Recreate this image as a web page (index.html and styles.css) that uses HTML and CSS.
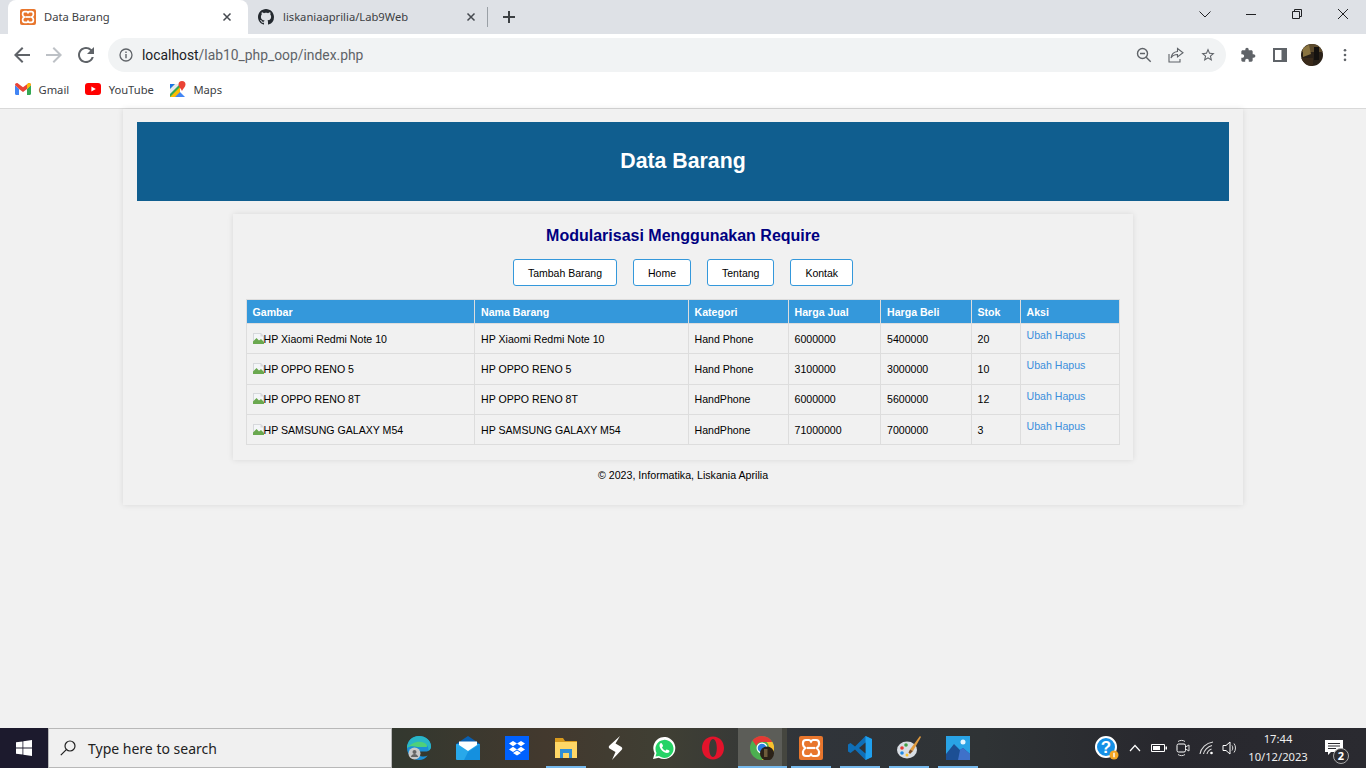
FILE: index.html
```html
<!DOCTYPE html>
<html lang="id">
<head>
<meta charset="utf-8">
<title>Data Barang</title>
<link rel="stylesheet" href="styles.css">
</head>
<body>
<div class="browser">
  <div class="tabstrip">
    <div class="tab active">
      <svg class="fav" viewBox="0 0 24 24"><rect width="24" height="24" rx="3" fill="#e8762d"/><path d="M7 4h3c1 0 1.500.8 2 1.500C12.500 4.800 13 4 14 4h3c2 0 3 1 3 3v1.500c0 1.500-1.200 2.500-2.500 3.500 1.300 1 2.500 2 2.500 3.500V17c0 2-1 3-3 3h-3c-1 0-1.500-.8-2-1.500-.5.7-1 1.500-2 1.500H7c-2 0-3-1-3-3v-1.500c0-1.500 1.200-2.500 2.500-3.500C5.200 11 4 10 4 8.500V7c0-2 1-3 3-3z" fill="none" stroke="#fff" stroke-width="2.600"/><path d="M8 12h8" stroke="#fff" stroke-width="2.600"/></svg>
      <span class="tab-title">Data Barang</span>
      <svg class="tab-x" viewBox="0 0 10 10"><path d="M1.500 1.500l7 7M8.500 1.500l-7 7" stroke="#45494f" stroke-width="1.500"/></svg>
    </div>
    <div class="tab second">
      <svg class="fav" viewBox="0 0 16 16"><path fill="#24292f" d="M8 0C3.580 0 0 3.580 0 8c0 3.540 2.290 6.530 5.470 7.590.4.070.550-.170.550-.380 0-.190-.010-.820-.010-1.490-2.010.370-2.530-.490-2.690-.940-.090-.230-.480-.940-.820-1.130-.280-.150-.680-.520-.010-.530.630-.010 1.080.580 1.230.820.720 1.210 1.870.870 2.330.660.070-.520.280-.870.510-1.070-1.780-.2-3.640-.890-3.640-3.950 0-.870.310-1.590.820-2.150-.080-.2-.360-1.020.080-2.120 0 0 .670-.210 2.200.820.640-.180 1.320-.270 2-.270.680 0 1.360.090 2 .270 1.530-1.040 2.200-.820 2.200-.820.440 1.100.160 1.920.080 2.120.510.560.820 1.270.820 2.150 0 3.070-1.870 3.750-3.650 3.950.290.250.540.730.540 1.480 0 1.070-.010 1.930-.010 2.200 0 .210.150.460.550.380A8.013 8.013 0 0016 8c0-4.420-3.580-8-8-8z"/></svg>
      <span class="tab-title">liskaniaaprilia/Lab9Web</span>
      <svg class="tab-x" viewBox="0 0 10 10"><path d="M1.500 1.500l7 7M8.500 1.500l-7 7" stroke="#45494f" stroke-width="1.500"/></svg>
    </div>
    <div class="tab-sep"></div>
    <svg class="new-tab" viewBox="0 0 14 14"><path d="M7 1v12M1 7h12" stroke="#3c4043" stroke-width="2"/></svg>
    <div class="win-controls">
      <svg class="win-btn" viewBox="0 0 12 12"><path d="M.5 3.500l5.500 5.500 5.500-5.500" fill="none" stroke="#202124"/></svg>
      <svg class="win-btn" viewBox="0 0 12 12"><path d="M1 6.500h10" stroke="#202124"/></svg>
      <svg class="win-btn" viewBox="0 0 12 12"><path d="M1.500 3.500h7v7h-7zM3.500 3.500v-2h7v7h-2" fill="none" stroke="#202124"/></svg>
      <svg class="win-btn" viewBox="0 0 12 12"><path d="M1 1l10 10M11 1L1 11" stroke="#202124"/></svg>
    </div>
  </div>

  <div class="toolbar">
    <svg class="nav-icon" viewBox="0 0 24 24"><path fill="#5f6368" d="M20 11H7.830l5.590-5.590L12 4l-8 8 8 8 1.410-1.410L7.830 13H20v-2z"/></svg>
    <svg class="nav-icon" viewBox="0 0 24 24"><path fill="#bdc1c6" d="M4 11h12.170l-5.590-5.590L12 4l8 8-8 8-1.410-1.410L16.170 13H4v-2z"/></svg>
    <svg class="nav-icon" viewBox="0 0 24 24"><path fill="#5f6368" d="M17.650 6.350A7.958 7.958 0 0012 4c-4.420 0-7.990 3.580-7.990 8s3.570 8 7.990 8c3.730 0 6.840-2.550 7.730-6h-2.080A5.990 5.990 0 0112 18c-3.310 0-6-2.690-6-6s2.690-6 6-6c1.660 0 3.140.690 4.220 1.780L13 11h7V4l-2.350 2.350z"/></svg>
    <div class="omnibox">
      <svg class="info" viewBox="0 0 14 14"><circle cx="7" cy="7" r="6" fill="none" stroke="#5f6368" stroke-width="1.300"/><path d="M7 6v4.200M7 3.600v1.400" stroke="#5f6368" stroke-width="1.400"/></svg>
      <span class="url"><span class="host">localhost</span>/lab10_php_oop/index.php</span>
      <span class="omni-spacer"></span>
      <svg class="omni-icon" viewBox="0 0 16 16"><circle cx="6.500" cy="6.500" r="5" fill="none" stroke="#5f6368" stroke-width="1.400"/><path d="M4 6.500h5M10.200 10.200l4.500 4.500" stroke="#5f6368" stroke-width="1.400"/></svg>
      <svg class="omni-icon" viewBox="0 0 16 16"><path d="M9.500 1.500l5.500 4.300-5.500 4.200V7.500c-3 0-5 1-6.500 3.500.5-3.500 2.500-6 6.500-6.500z" fill="none" stroke="#5f6368" stroke-width="1.100"/><path d="M1 7v8h11v-3" fill="none" stroke="#5f6368" stroke-width="1.100"/></svg>
      <svg class="omni-icon" viewBox="0 0 24 24"><path fill="#5f6368" d="M22 9.240l-7.190-.620L12 2 9.190 8.630 2 9.240l5.460 4.730L5.820 21 12 17.270 18.180 21l-1.630-7.030L22 9.240zM12 15.400l-3.760 2.270 1-4.280-3.320-2.880 4.380-.380L12 6.100l1.710 4.040 4.380.380-3.320 2.880 1 4.280L12 15.400z"/></svg>
    </div>
    <div class="tool-right">
      <svg class="tool-icon" viewBox="0 0 24 24"><path fill="#5f6368" d="M20.500 11H19V7c0-1.100-.9-2-2-2h-4V3.500C13 2.120 11.880 1 10.500 1S8 2.120 8 3.500V5H4c-1.100 0-1.990.9-1.990 2v3.800H3.500c1.490 0 2.700 1.210 2.700 2.700s-1.210 2.700-2.700 2.700H2V20c0 1.100.9 2 2 2h3.800v-1.500c0-1.490 1.210-2.700 2.700-2.700 1.490 0 2.700 1.210 2.700 2.700V22H17c1.100 0 2-.9 2-2v-4h1.500c1.380 0 2.500-1.120 2.500-2.500S21.880 11 20.500 11z"/></svg>
      <svg class="tool-icon panel" viewBox="0 0 14 14"><path fill="#5f6368" d="M0 0h14v14H0z"/><path fill="#fff" d="M2 2h6.500v10H2z"/></svg>
      <svg class="avatar" viewBox="0 0 22 22"><defs><clipPath id="av"><circle cx="11" cy="11" r="11"/></clipPath></defs><g clip-path="url(#av)"><rect width="22" height="22" fill="#2a2118"/><path d="M0 0h22v8H0z" fill="#5c4a2c"/><path d="M2 4l6-3 2 9-8 3z" fill="#8a7440"/><path d="M13 3h5v13h-5z" fill="#14110f"/><path d="M0 14h12v8H0z" fill="#3a2a1a"/></g></svg>
      <svg class="dots" viewBox="0 0 4 16"><circle cx="2" cy="2.500" r="1.500" fill="#5f6368"/><circle cx="2" cy="8" r="1.500" fill="#5f6368"/><circle cx="2" cy="13.500" r="1.500" fill="#5f6368"/></svg>
    </div>
  </div>

  <div class="bookmarks">
    <div class="bm">
      <svg class="bm-icon" viewBox="0 0 16 12"><path d="M1 12V2.500L8 7.500l7-5V12h-3V6L8 9 4 6v6z" fill="#fff"/><path d="M0 2v8.800C0 11.500.5 12 1.200 12H4V6z" fill="#4285f4"/><path d="M12 12h2.800c.7 0 1.200-.5 1.200-1.200V2l-4 4z" fill="#34a853"/><path d="M0 2c0-1.800 2-2.500 3-1.500L8 4.200 13 .5c1-1 3-.3 3 1.500l-4 4-4 3-4-3z" fill="#ea4335"/><path d="M12 6l4-4c0-1.800-2-2.500-3-1.500L12 1.300z" fill="#fbbc04"/></svg>
      <span>Gmail</span>
    </div>
    <div class="bm">
      <svg class="bm-icon" viewBox="0 0 16 12"><rect width="16" height="12" rx="3" fill="#f00"/><path d="M6.400 3.400L10.800 6l-4.400 2.600z" fill="#fff"/></svg>
      <span>YouTube</span>
    </div>
    <div class="bm">
      <svg class="bm-icon" viewBox="0 0 16 16"><path d="M0 3h10v13H0z" fill="#34a853"/><path d="M0 16L10 6v10z" fill="#fbbc04"/><path d="M5 16l5-5 5 5z" fill="#4285f4"/><path d="M0 3h5L0 8z" fill="#1a73e8"/><path d="M5 3h5L0 13V8z" fill="#e8eaed"/><path d="M12 0a3.500 3.500 0 013.500 3.500C15.500 6 13 7.500 12 10 11 7.500 8.500 6 8.500 3.500A3.500 3.500 0 0112 0z" fill="#ea4335"/></svg>
      <span>Maps</span>
    </div>
  </div>
</div>

<main class="viewport">
  <div class="container">
    <header class="banner"><h1>Data Barang</h1></header>
    <section class="content">
      <h2>Modularisasi Menggunakan Require</h2>
      <nav class="menu">
        <a class="btn">Tambah Barang</a>
        <a class="btn">Home</a>
        <a class="btn">Tentang</a>
        <a class="btn">Kontak</a>
      </nav>
      <table class="data">
        <colgroup>
          <col class="c1"><col class="c2"><col class="c3"><col class="c4"><col class="c5"><col class="c6"><col class="c7">
        </colgroup>
        <thead>
          <tr><th>Gambar</th><th>Nama Barang</th><th>Kategori</th><th>Harga Jual</th><th>Harga Beli</th><th>Stok</th><th>Aksi</th></tr>
        </thead>
        <tbody>
          <tr>
            <td><svg class="broken" viewBox="0 0 11 11"><path d="M0 0h8l3 3v8H0z" fill="#d7d9dc"/><path d="M1 1h6.500v2.500H10V9H1z" fill="#f4f6f8"/><path d="M0 11V8.500L3.500 5 6 7.500 8 6l3 3v2z" fill="#6aa84f"/></svg>HP Xiaomi Redmi Note 10</td>
            <td>HP Xiaomi Redmi Note 10</td><td>Hand Phone</td><td>6000000</td><td>5400000</td><td>20</td>
            <td class="act"><a>Ubah</a> <a>Hapus</a></td>
          </tr>
          <tr>
            <td><svg class="broken" viewBox="0 0 11 11"><path d="M0 0h8l3 3v8H0z" fill="#d7d9dc"/><path d="M1 1h6.500v2.500H10V9H1z" fill="#f4f6f8"/><path d="M0 11V8.500L3.500 5 6 7.500 8 6l3 3v2z" fill="#6aa84f"/></svg>HP OPPO RENO 5</td>
            <td>HP OPPO RENO 5</td><td>Hand Phone</td><td>3100000</td><td>3000000</td><td>10</td>
            <td class="act"><a>Ubah</a> <a>Hapus</a></td>
          </tr>
          <tr>
            <td><svg class="broken" viewBox="0 0 11 11"><path d="M0 0h8l3 3v8H0z" fill="#d7d9dc"/><path d="M1 1h6.500v2.500H10V9H1z" fill="#f4f6f8"/><path d="M0 11V8.500L3.500 5 6 7.500 8 6l3 3v2z" fill="#6aa84f"/></svg>HP OPPO RENO 8T</td>
            <td>HP OPPO RENO 8T</td><td>HandPhone</td><td>6000000</td><td>5600000</td><td>12</td>
            <td class="act"><a>Ubah</a> <a>Hapus</a></td>
          </tr>
          <tr>
            <td><svg class="broken" viewBox="0 0 11 11"><path d="M0 0h8l3 3v8H0z" fill="#d7d9dc"/><path d="M1 1h6.500v2.500H10V9H1z" fill="#f4f6f8"/><path d="M0 11V8.500L3.500 5 6 7.500 8 6l3 3v2z" fill="#6aa84f"/></svg>HP SAMSUNG GALAXY M54</td>
            <td>HP SAMSUNG GALAXY M54</td><td>HandPhone</td><td>71000000</td><td>7000000</td><td>3</td>
            <td class="act"><a>Ubah</a> <a>Hapus</a></td>
          </tr>
        </tbody>
      </table>
    </section>
    <footer class="foot">© 2023, Informatika, Liskania Aprilia</footer>
  </div>
</main>

<div class="taskbar">
  <div class="start">
    <svg class="winlogo" viewBox="0 0 16 16"><path fill="#fff" d="M0 2.300l6.500-.9v6.200H0zM7.300 1.300L16 0v7.600H7.300zM0 8.400h6.500v6.200L0 13.700zM7.300 8.400H16V16l-8.700-1.300z"/></svg>
  </div>
  <div class="search">
    <svg class="lens" viewBox="0 0 16 16"><circle cx="10" cy="6" r="5" fill="none" stroke="#222" stroke-width="1.200"/><path d="M6.300 9.700L.8 15.200" stroke="#222" stroke-width="1.200"/></svg>
    <span>Type here to search</span>
  </div>
  <div class="apps">
    <div class="app">
      <svg viewBox="0 0 24 24"><path d="M0 12C0 5.500 5 0 12 0c6.500 0 12 4.500 12 10.500 0 3-2.500 5-5.500 5H10c0 3 3 5 6.500 5 1.500 0 3-.4 4.200-1C18.500 22.500 15.500 24 12 24 5 24 0 18.500 0 12z" fill="#1b8fd6"/><path d="M0 12C1 5.500 7 3 12 3c4.500 0 8 2.500 8 6.500 0 .5 0 1-.2 1.500H10.500C6 10 2 10 0 12z" fill="#4fd07a"/><path d="M12 0c6.500 0 12 4.500 12 10.500 0 2-1 3.500-2.500 4.300.5-5-3-9-9-9C8 5.800 3 8.500 0 12 0 5.500 5 0 12 0z" fill="#29b6c6"/><circle cx="7.500" cy="17.500" r="6" fill="#c9c9c9"/><circle cx="7.500" cy="16" r="2" fill="#666"/><path d="M3.800 21c.5-2 2-3 3.700-3s3.200 1 3.700 3z" fill="#666"/></svg>
    </div>
    <div class="app">
      <svg viewBox="0 0 24 24"><path d="M0 8L12 0l12 8v3H0z" fill="#0a5fb0"/><rect y="8" width="24" height="16" rx="1" fill="#28a8ea"/><path d="M3 5.500h18V9l-9 6-9-6z" fill="#fff"/><path d="M0 8l12 8 12-8v16H8l4-8z" fill="#1490df"/></svg>
    </div>
    <div class="app">
      <svg viewBox="0 0 24 24"><rect width="24" height="24" fill="#0061fe"/><path d="M8 5l4 2.600L8 10.200 4 7.600zM16 5l4 2.600-4 2.600-4-2.600zM8 10.800l4 2.600-4 2.600-4-2.600zM16 10.800l4 2.600-4 2.600-4-2.600zM8 17l4-2.600 4 2.600-4 2.600z" fill="#fff"/></svg>
    </div>
    <div class="app under">
      <svg viewBox="0 0 24 24"><path d="M1 2h8l2 3h12v17H1z" fill="#d89a1e"/><path d="M1 6h22v16H1z" fill="#ffd766"/><path d="M6 22v-9h12v9h-3v-5H9v5z" fill="#2f8fd8"/></svg>
    </div>
    <div class="app">
      <svg viewBox="0 0 24 24"><path d="M17 0L6.500 9.500c-1 1-1 2 0 3l6 3.500L9 24l9.500-10c1-1 1-2 0-3l-6-3.500z" fill="#fff"/></svg>
    </div>
    <div class="app">
      <svg viewBox="0 0 24 24"><path d="M1 23l1.600-5.800A11 11 0 1112 23a11 11 0 01-5.200-1.300z" fill="#fff"/><path d="M3.500 20.500l1-3.500A9 9 0 117 20z" fill="#25d366"/><path d="M9 7c-.5 0-1.500 1-1.500 2.500 0 3 4 7.500 7.500 7.500 1.500 0 2.500-1 2.500-2 0-.5-2.500-1.700-3-1.500l-1 1.200c-1.200-.3-3-2-3.500-3.500l1-1c.3-.5-1-3.200-2-3.200z" fill="#fff"/></svg>
    </div>
    <div class="app">
      <svg viewBox="0 0 24 24"><path fill-rule="evenodd" d="M12 .5C5.500.5 1 5.500 1 12s4.500 11.500 11 11.500S23 18.500 23 12 18.500.5 12 .5zm0 2.500c2.300 0 3.800 4 3.800 9s-1.500 9-3.800 9-3.800-4-3.800-9 1.500-9 3.800-9z" fill="#e3132b"/></svg>
    </div>
    <div class="app on">
      <svg viewBox="0 0 24 24"><circle cx="12" cy="12" r="12" fill="#4caf50"/><path d="M12 0a12 12 0 0110.400 6H12a6 6 0 00-5.700 4L2.500 4.500A12 12 0 0112 0z" fill="#e53935"/><path d="M22.400 6A12 12 0 0112 24l5-9a6 6 0 00-.5-9z" fill="#fbc02d"/><circle cx="12" cy="12" r="5.500" fill="#fff"/><circle cx="12" cy="12" r="4.300" fill="#2a7de1"/><circle cx="17" cy="17.500" r="7" fill="#2b2218"/><path d="M14 13h3.500v8H14z" fill="#6d5b3a"/></svg>
    </div>
    <div class="app under">
      <svg viewBox="0 0 24 24"><rect width="24" height="24" rx="2" fill="#e8762d"/><path d="M7 4h3c1 0 1.500.8 2 1.500C12.500 4.800 13 4 14 4h3c2 0 3 1 3 3v1.500c0 1.500-1.200 2.500-2.500 3.500 1.300 1 2.500 2 2.500 3.500V17c0 2-1 3-3 3h-3c-1 0-1.500-.8-2-1.500-.5.7-1 1.500-2 1.500H7c-2 0-3-1-3-3v-1.500c0-1.500 1.200-2.500 2.500-3.500C5.200 11 4 10 4 8.500V7c0-2 1-3 3-3z" fill="none" stroke="#fff" stroke-width="2.200"/><path d="M8 12h8" stroke="#fff" stroke-width="2.200"/></svg>
    </div>
    <div class="app under">
      <svg viewBox="0 0 24 24"><path d="M17.500 0L24 3v18l-6.500 3L7 13.500l-4.500 3.500L0 15.500v-7L2.500 7 7 10.500z" fill="#0f6fb8"/><path d="M17.500 0L24 3v18l-6.500 3z" fill="#1fa0ee"/><path d="M17.500 6.500v11L11 12z" fill="#2f3337"/></svg>
    </div>
    <div class="app under">
      <svg viewBox="0 0 24 24"><ellipse cx="10" cy="14" rx="10" ry="8.500" fill="#d8dde3"/><circle cx="5" cy="12" r="1.800" fill="#e53935"/><circle cx="9" cy="9" r="1.800" fill="#43a047"/><circle cx="5" cy="17" r="1.800" fill="#1e88e5"/><circle cx="10" cy="19" r="1.500" fill="#fbc02d"/><path d="M23 0l1 1-8 14-3-1.500z" fill="#e09a3e"/><path d="M13 13.500l3 1.500-3 3-1.500-1.500z" fill="#7a4a20"/></svg>
    </div>
    <div class="app under">
      <svg viewBox="0 0 24 24"><rect width="24" height="24" fill="#29a3e6"/><circle cx="17" cy="6" r="2.500" fill="#e6f6ff"/><path d="M0 18L8 8l6 6 3-2 7 6v6H0z" fill="#1c4f94"/><path d="M14 14l3-2 7 6v6H12z" fill="#3f71c9"/></svg>
    </div>
  </div>
  <div class="tray">
    <svg class="help" viewBox="0 0 24 24"><circle cx="11" cy="11" r="10" fill="#1590e6" stroke="#fff" stroke-width="2"/><text class="help-q" x="11" y="17">?</text><circle cx="19" cy="19" r="4.500" fill="#f5a623"/><path d="M19 16.800v4.500" stroke="#fff" stroke-width="1.400"/></svg>
    <svg class="t-chev" viewBox="0 0 12 8"><path d="M1 7l5-5.500L11 7" fill="none" stroke="#fff" stroke-width="1.200"/></svg>
    <svg class="t-batt" viewBox="0 0 16 10"><path d="M.5 1.500h13v7H.5z" fill="none" stroke="#fff"/><path d="M2 3h7v4H2zM14.500 3.500H16v3h-1.500z" fill="#fff"/></svg>
    <svg class="t-cam" viewBox="0 0 14 18"><rect x="1" y="5" width="8.500" height="8" rx="1.500" fill="none" stroke="#fff"/><path d="M9.500 8L13 6v6l-3.500-2zM2 2.500c2-1.500 5-1.500 7 0M2 15.500c2 1.500 5 1.500 7 0" fill="none" stroke="#ddd"/></svg>
    <svg class="t-wifi" viewBox="0 0 16 14"><path d="M1 13C2 7 7 2 14 1M4.500 13C5 9.500 8.500 5.500 13 4.500M8 13c.4-2 2-4 4.500-5" fill="none" stroke="#ddd" stroke-width="1.100"/><circle cx="12.500" cy="12" r="1.300" fill="#fff"/></svg>
    <svg class="t-vol" viewBox="0 0 16 14"><path d="M1 4.500h3L8 1v12L4 9.500H1z" fill="none" stroke="#fff"/><path d="M10 4.500c1 1.500 1 3.500 0 5M12 2.500c2 2.500 2 6.500 0 9" fill="none" stroke="#ddd"/></svg>
    <div class="clock"><span>17:44</span><span>10/12/2023</span></div>
    <div class="notif">
      <svg class="n-icon" viewBox="0 0 18 16"><path d="M0 0h18v12H6l-3 3v-3H0z" fill="#fff"/><path d="M3 3.500h12M3 6h12M3 8.500h8" stroke="#2b2b30"/></svg>
      <span class="badge">2</span>
    </div>
  </div>
</div>
</body>
</html>
```

FILE: styles.css
```css
* { box-sizing: border-box; }
html, body { margin: 0; padding: 0; height: 100%; overflow: hidden; }
body {
  display: flex;
  flex-direction: column;
  height: 768px;
  background: #f1f1f1;
  font-family: "Liberation Sans", Arial, sans-serif;
}

/* browser chrome */
.browser { flex: none; background: #fff; border-bottom: 1px solid #d9d9d9; height: 109px; }
.tabstrip { display: flex; align-items: center; height: 34px; background: #dee1e6; padding-left: 8px; }
.tab { display: flex; align-items: center; flex: none; width: 240px; height: 34px; font: 11.2px "Noto Sans", sans-serif; color: #3c4043; }
.tab.active { background: #fff; border-radius: 8px 8px 0 0; padding: 0 16px 0 12px; }
.tab.second { padding: 0 12px 0 10px; }
.fav { width: 16px; height: 16px; flex: none; }
.tab-title { flex: 1; margin-left: 8px; padding-bottom: 1px; white-space: nowrap; }
.second .tab-title { margin-left: 9px; }
.tab-x { width: 10px; height: 10px; flex: none; }
.tab-sep { width: 1px; height: 20px; background: #9aa0a6; margin-left: -1px; }
.new-tab { width: 14px; height: 14px; margin-left: 14px; }
.win-controls { display: flex; align-items: center; margin-left: auto; margin-right: 17px; padding-bottom: 6px; gap: 34px; }
.win-btn { width: 12px; height: 12px; display: block; }

.toolbar { display: flex; align-items: center; height: 44px; padding: 0 0 2px 10px; }
.nav-icon { width: 24px; height: 24px; margin-right: 8px; flex: none; }
.omnibox { display: flex; align-items: center; flex: none; width: 1118px; height: 34px; background: #f1f3f4; border-radius: 17px; padding: 0 10px 0 11px; margin-left: 2px; }
.info { width: 14px; height: 14px; flex: none; }
.url { margin-left: 9px; font: 13.85px Roboto, sans-serif; color: #5f6368; white-space: nowrap; }
.host { color: #202124; }
.omni-spacer { flex: 1; }
.omni-icon { width: 16px; height: 16px; margin-left: 16px; flex: none; }
.tool-right { display: flex; align-items: center; margin-left: 14px; }
.tool-icon { width: 16px; height: 16px; flex: none; }
.panel { width: 14px; height: 14px; margin-left: 17px; }
.avatar { width: 22px; height: 22px; margin-left: 14px; }
.dots { width: 4px; height: 14px; margin-left: 20px; }

.bookmarks { display: flex; align-items: center; height: 30px; padding: 0 0 8px 15px; gap: 16px; font: 11.2px "Noto Sans", sans-serif; color: #3c4043; }
.bm { display: flex; align-items: center; gap: 7.5px; }
.bm-icon { width: 16px; height: 16px; flex: none; display: block; }

/* page */
.viewport { flex: 1; min-height: 0; }
.container {
  width: 1120px;
  margin: 0 auto;
  padding: 13px 14px 23px;
  background: #f1f1f1;
  box-shadow: 0 0 6px rgba(0, 0, 0, .1);
}
.banner { height: 79px; background: #105e8f; display: flex; align-items: center; justify-content: center; }
.banner h1 { margin: 0; font-size: 21.3px; font-weight: 700; color: #fff; }
.content {
  width: 900px;
  height: 246px;
  margin: 13px auto 0;
  padding: 13px 13px 0;
  background: #f1f1f1;
  box-shadow: 0 0 6px rgba(0, 0, 0, .1);
}
.content h2 { margin: 0; height: 18px; line-height: 18px; text-align: center; font-size: 16px; font-weight: 700; color: #000080; }
.menu { display: flex; justify-content: center; gap: 16px; margin-top: 14px; }
.btn {
  display: flex;
  align-items: center;
  height: 27px;
  padding: 0 14px;
  background: #fff;
  border: 1px solid #3498db;
  border-radius: 3px;
  font-size: 10.5px;
  color: #000;
}
.data { width: 873px; margin-top: 13px; border-collapse: collapse; table-layout: fixed; font-size: 10.6px; color: #000; }
.c1 { width: 228px; } .c2 { width: 214px; } .c3 { width: 100px; } .c4 { width: 92px; }
.c5 { width: 91px; } .c6 { width: 49px; } .c7 { width: 99px; }
.data th, .data td { border: 1px solid #ddd; padding: 0 5.5px; text-align: left; white-space: nowrap; }
.data th:nth-child(2), .data td:nth-child(2), .data th:nth-child(5), .data td:nth-child(5) { padding-left: 6px; }
.data th { height: 24px; background: #3498db; color: #fff; font-weight: 700; }
.data td { height: 30.3px; }
.data td.act { vertical-align: top; padding-top: 5px; color: #3b8fdc; }
.act a { color: #3b8fdc; }
.broken { width: 11px; height: 11px; vertical-align: -1px; }
.foot { margin-top: 9px; height: 13px; line-height: 13px; text-align: center; font-size: 10.67px; color: #000; }

/* taskbar */
.taskbar {
  flex: none;
  display: flex;
  height: 40px;
  background: linear-gradient(90deg, #1d1b2e 0, #33382f 29%, #43392e 40%, #3f3f34 49%, #30343a 59%, #2f3335 72%, #28282e 85%, #2a2a30 100%);
  color: #fff;
}
.start { flex: none; width: 48px; display: flex; align-items: center; justify-content: center; background: #1c1a2d; }
.winlogo { width: 16px; height: 16px; }
.search {
  flex: none;
  width: 344px;
  display: flex;
  align-items: center;
  gap: 12px;
  padding-left: 11px;
  background: #f0f0f0;
  border: 1px solid #b8b8b8;
  font: 14px "Noto Sans", sans-serif;
  color: #222;
}
.lens { width: 16px; height: 16px; flex: none; }
.apps { display: flex; flex: none; margin-left: 2.5px; }
.app { width: 49px; height: 40px; display: flex; align-items: center; justify-content: center; }
.app svg { width: 24px; height: 24px; }
.app.under { background: linear-gradient(#76b9ed, #76b9ed) center bottom / 40px 2px no-repeat; }
.app.on {
  background:
    linear-gradient(#76b9ed, #76b9ed) center bottom / 100% 2px no-repeat,
    linear-gradient(90deg, #5c5d58 90%, #45463f 90%);
}
.tray { flex: 1; display: flex; align-items: center; padding-left: 112.5px; }
.help { width: 24px; height: 24px; flex: none; }
.help-q { font: 700 17px "Liberation Sans", sans-serif; fill: #fff; text-anchor: middle; }
.t-chev { width: 12px; height: 8px; margin-left: 10px; flex: none; }
.t-batt { width: 16px; height: 10px; margin-left: 10px; flex: none; }
.t-cam { width: 14px; height: 18px; margin-left: 9px; flex: none; }
.t-wifi { width: 16px; height: 14px; margin-left: 9px; flex: none; }
.t-vol { width: 16px; height: 14px; margin-left: 7px; flex: none; }
.clock { flex: none; width: 72px; margin-left: 4px; display: flex; flex-direction: column; align-items: center; font: 11.2px/18px "Noto Sans", sans-serif; color: #eee; }
.notif { position: relative; flex: none; margin-left: 11px; width: 26px; height: 24px; }
.n-icon { width: 18px; height: 16px; position: absolute; left: 0; top: 4px; }
.badge { position: absolute; left: 8px; top: 12px; width: 16px; height: 16px; border-radius: 50%; background: #2b2b30; border: 1px solid #aaa; font: 700 11px/14px "Noto Sans", sans-serif; text-align: center; color: #fff; }
```
